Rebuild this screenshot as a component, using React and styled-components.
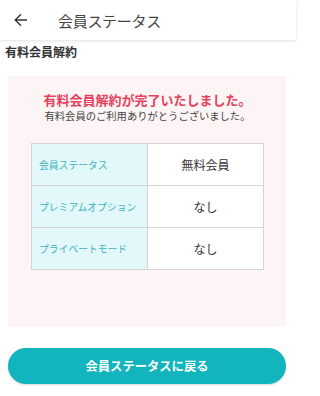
import styled, { createGlobalStyle } from 'styled-components'

const Global = createGlobalStyle`
  html, body {
    margin: 0;
    padding: 0;
    background: #fff;
    font-family: "Noto Sans CJK JP", "Noto Sans", sans-serif;
  }
`

const rows = [
  { label: '会員ステータス', value: '無料会員' },
  { label: 'プレミアムオプション', value: 'なし' },
  { label: 'プライベートモード', value: 'なし' },
]

const App = () => {
  return (
    <Page>
      <Global />
      <Header>
        <BackButton aria-label="戻る">
          <svg width="14" height="14" viewBox="0 0 14 14" fill="none">
            <path d="M13 7H1.5M7 1.2L1.2 7L7 12.8" stroke="#333" strokeWidth="1.4" />
          </svg>
        </BackButton>
        <HeaderTitle>会員ステータス</HeaderTitle>
      </Header>

      <SectionTitle>有料会員解約</SectionTitle>

      <Panel>
        <Done>有料会員解約が完了いたしました。</Done>
        <Thanks>有料会員のご利用ありがとうございました。</Thanks>

        <Table>
          <tbody>
            {rows.map((r) => (
              <tr key={r.label}>
                <LabelCell>{r.label}</LabelCell>
                <ValueCell>{r.value}</ValueCell>
              </tr>
            ))}
          </tbody>
        </Table>
      </Panel>

      <ReturnButton>会員ステータスに戻る</ReturnButton>
    </Page>
  )
}

export default App

const Page = styled.div`
  width: 296px;
  min-height: 396px;
  background: #fff;
`

const Header = styled.div`
  height: 40px;
  display: flex;
  align-items: center;
  box-shadow: 0 1px 3px rgba(0, 0, 0, 0.12);
`

const BackButton = styled.div`
  width: 14px;
  height: 14px;
  margin-left: 14px;
  margin-right: 30px;
  display: flex;
  align-items: center;
`

const HeaderTitle = styled.div`
  font-size: 15px;
  color: #444;
  letter-spacing: -0.3px;
`

const SectionTitle = styled.div`
  padding: 2px 0 0 5px;
  height: 20px;
  line-height: 20px;
  font-size: 12px;
  font-weight: bold;
  color: #333;
`

const Panel = styled.div`
  margin: 14px 10px 0 8px;
  padding: 15px 22px 57px 23px;
  background: #fdf5f5;
  text-align: center;
`

const Done = styled.div`
  font-size: 13px;
  line-height: 18px;
  font-weight: bold;
  color: #e5405c;
`

const Thanks = styled.div`
  font-size: 10.3px;
  line-height: 14px;
  color: #444;
  white-space: nowrap;
`

const Table = styled.table`
  margin-top: 20px;
  width: 100%;
  border-collapse: collapse;
  background: #fff;
  border: 1px solid #d4d4d4;
`

const LabelCell = styled.td`
  width: 116px;
  height: 41px;
  padding: 0 0 0 7px;
  box-sizing: border-box;
  background: #e2f8fb;
  border: 1px solid #d4d4d4;
  color: #3fb3bb;
  font-size: 9.8px;
  text-align: left;
  white-space: nowrap;
`

const ValueCell = styled.td`
  height: 41px;
  padding: 0;
  border: 1px solid #d4d4d4;
  color: #333;
  font-size: 12px;
  text-align: center;
`

const ReturnButton = styled.div`
  margin: 21px 10px 0 8px;
  height: 36px;
  border-radius: 18px;
  background: #12b4be;
  color: #fff;
  font-size: 12.3px;
  font-weight: bold;
  display: flex;
  align-items: center;
  justify-content: center;
  box-shadow: 0 1px 2px rgba(0, 0, 0, 0.15);
`
